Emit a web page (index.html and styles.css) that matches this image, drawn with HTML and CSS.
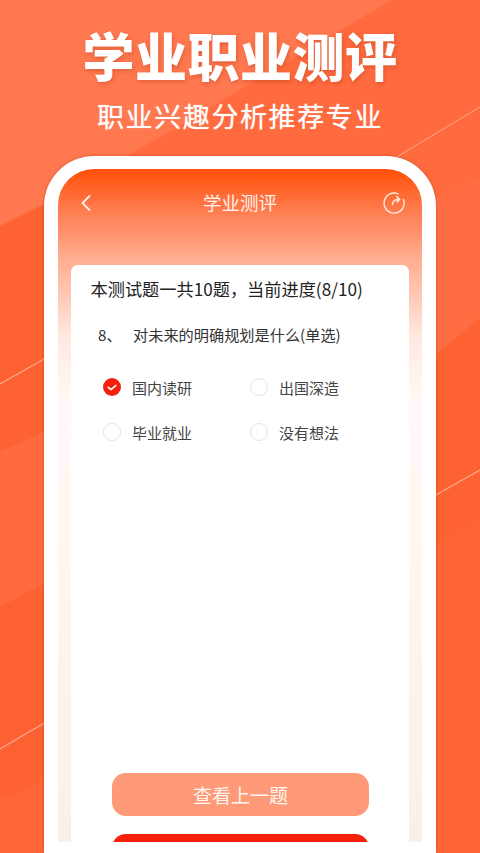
FILE: index.html
```html
<!DOCTYPE html>
<html lang="zh-CN">
<head>
<meta charset="utf-8">
<title>学业职业测评</title>
<link rel="stylesheet" href="styles.css">
</head>
<body>
<div class="poster">
  <svg class="decor" width="480" height="853" viewBox="0 0 480 853" aria-hidden="true">
    <polygon points="0,0 392,0 130,155 44,204 0,226" fill="#ff7850"/>
    <polygon points="392,0 480,0 480,177 436,195 250,260 130,155" fill="#ff6b3f"/>
    <polygon points="436,195 480,177 480,318 436,354" fill="#ff6e43"/>
    <polygon points="0,452 44,432 44,583 0,607" fill="#ff6a3e"/>
    <polygon points="436,545 480,522 480,853 436,853" fill="#ff6436"/>
    <polygon points="0,800 44,780 44,853 0,853" fill="#ff6638"/>
    <line x1="395" y1="158" x2="480" y2="107" stroke="#ffa98e" stroke-width="1"/>
    <line x1="0" y1="384" x2="46" y2="358" stroke="#ffa98e" stroke-width="1.2"/>
    <line x1="434" y1="496" x2="480" y2="470" stroke="#ffa98e" stroke-width="1.2"/>
    <line x1="0" y1="749" x2="46" y2="722" stroke="#ffa98e" stroke-width="1.2"/>
  </svg>
  <header class="hero">
    <h1 class="hero-title">学业职业测评</h1>
    <p class="hero-sub">职业兴趣分析推荐专业</p>
  </header>
  <div class="phone">
    <div class="screen">
      <div class="appbar">
        <svg class="back" width="12" height="18" viewBox="0 0 12 18"><path d="M9.5 2 L2.5 9 L9.5 16" fill="none" stroke="#fff2ea" stroke-width="1.8" stroke-linecap="round" stroke-linejoin="round"/></svg>
        <span class="appbar-title">学业测评</span>
        <svg class="refresh" width="24" height="24" viewBox="0 0 24 24"><path d="M16 2.9 A10 10 0 1 0 21.4 8.5" fill="none" stroke="#ffe9dc" stroke-width="1.4" stroke-linecap="round"/><path d="M10.5 13.5 C10.5 10.5 12.5 8.5 17 8.5 M14.8 5.6 L17.6 8.5 L15 11" fill="none" stroke="#ffe9dc" stroke-width="1.6" stroke-linecap="round" stroke-linejoin="round"/></svg>
      </div>
      <main class="card">
        <p class="progress">本测试题一共10题，当前进度(8/10)</p>
        <p class="question"><span class="q-no">8、</span><span>对未来的明确规划是什么(单选)</span></p>
        <div class="options">
          <div class="option"><svg class="tick" width="18" height="18" viewBox="0 0 18 18"><circle cx="9" cy="9" r="9" fill="#f6200e"/><path d="M5 9.2 L8 11.6 L13 7.4" fill="none" stroke="#fff" stroke-width="1.5" stroke-linecap="round" stroke-linejoin="round"/></svg><span>国内读研</span></div>
          <div class="option"><i class="radio"></i><span>出国深造</span></div>
          <div class="option"><i class="radio"></i><span>毕业就业</span></div>
          <div class="option"><i class="radio"></i><span>没有想法</span></div>
        </div>
        <div class="actions">
          <button class="btn btn-prev">查看上一题</button>
          <button class="btn btn-next"></button>
        </div>
      </main>
    </div>
  </div>
</div>
</body>
</html>
```
FILE: styles.css
```css
* { box-sizing: border-box; }
html, body { margin: 0; padding: 0; }
body { width: 480px; height: 853px; overflow: hidden; font-family: "Noto Sans CJK SC", "Liberation Sans", sans-serif; }
.poster { position: relative; width: 480px; height: 853px; overflow: hidden; background: #ff6232; display: flex; flex-direction: column; align-items: center; }
.decor { position: absolute; left: 0; top: 0; }
.hero { position: relative; height: 156px; display: flex; flex-direction: column; align-items: center; color: #fff; }
.hero-title { margin: 19px 0 0; font-size: 52px; line-height: 72px; font-weight: 900; letter-spacing: .5px; text-shadow: 1px 2px 4px rgba(170,50,10,.35); white-space: nowrap; }
.hero-sub { margin: 5px 0 0; font-size: 27px; line-height: 40px; font-weight: 400; letter-spacing: 1.6px; text-shadow: 0 0 1px rgba(255,255,255,.7); white-space: nowrap; }
.phone { position: relative; width: 392px; height: 697px; background: #fff; border-radius: 50px 50px 0 0; padding: 13px 14px 0; box-shadow: 0 0 3px rgba(170,50,10,.55); }
.screen { height: 673px; border-radius: 36px 36px 0 0; overflow: hidden; background: linear-gradient(180deg, #ff4f08 0%, #ff7b4e 6%, #ffab8e 13%, #ffe9e0 25%, #fffaf8 35%, #fbefe8 100%); padding: 0 13px; display: flex; flex-direction: column; }
.appbar { height: 96px; flex: none; display: flex; align-items: flex-start; justify-content: space-between; padding: 25px 3px 0 9px; position: relative; }
.appbar-title { position: absolute; left: 0; right: 0; top: 19px; text-align: center; font-size: 18.5px; line-height: 28px; color: #fff3ec; }
.refresh { margin-top: -3px; }
.card { flex: 1; background: #fff; border-radius: 7px 7px 0 0; padding: 11px 0 0; display: flex; flex-direction: column; min-height: 0; }
.progress { margin: 0 0 0 19.5px; font-size: 17.2px; line-height: 26px; color: #222; white-space: nowrap; }
.question { margin: 21px 0 0 27px; font-size: 15.2px; line-height: 22px; color: #333; display: flex; white-space: nowrap; }
.q-no { width: 35px; flex: none; }
.options { margin: 32px 0 0 32px; display: grid; grid-template-columns: 147px 1fr; row-gap: 25px; }
.option { display: flex; align-items: center; gap: 11px; height: 20px; font-size: 15px; color: #444; }
.tick { flex: none; }
.radio { display: block; flex: none; width: 18px; height: 18px; border-radius: 50%; border: 1px solid #e4e4e4; background: #fff; }
.actions { margin: auto 41px 0; display: flex; flex-direction: column; gap: 18px; height: 69px; flex: none; }
.btn { flex: none; width: 257px; height: 43px; border: 0; border-radius: 14px; color: #fff; font: 400 19px/43px "Noto Sans CJK SC", sans-serif; padding: 0; }
.btn-prev { background: #ff9a78; color: #fff6f0; }
.btn-next { background: #f6210a; }
```
